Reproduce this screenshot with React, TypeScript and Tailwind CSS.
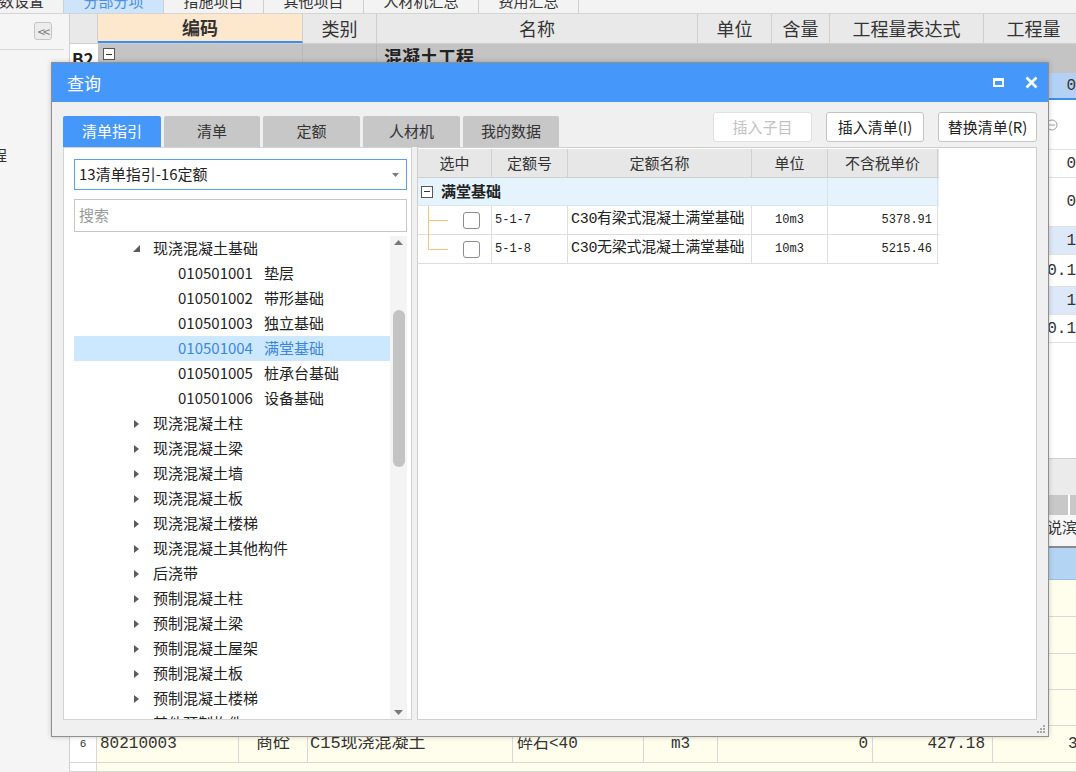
import React from 'react';

const sans = "font-['Noto_Sans_CJK_SC','Noto_Sans',sans-serif]";
const song = "font-['Liberation_Mono','Noto_Sans_CJK_SC',monospace]";

const topTabs = [
  { label: '参数设置', w: 'w-[64px]', align: 'justify-end pr-[19px]', active: false },
  { label: '分部分项', w: 'w-[100px]', align: 'justify-center', active: true },
  { label: '措施项目', w: 'w-[100px]', align: 'justify-center', active: false },
  { label: '其他项目', w: 'w-[100px]', align: 'justify-center', active: false },
  { label: '人材机汇总', w: 'w-[115px]', align: 'justify-center', active: false },
  { label: '费用汇总', w: 'w-[100px]', align: 'justify-center', active: false },
];

function TopTabs() {
  return (
    <div className="flex h-[14px] bg-[#f3f3f3] border-b border-[#d4d4d4] overflow-hidden">
      {topTabs.map((t) => (
        <div
          key={t.label}
          className={`${t.w} ${t.align} flex items-start overflow-hidden border-r border-[#cfcfcf] text-[15px] leading-[2px] whitespace-nowrap ${
            t.active ? 'bg-[#cde4fa] text-[#4a8fe0]' : 'text-[#333]'
          }`}
        >
          {t.label}
        </div>
      ))}
    </div>
  );
}

function Sidebar() {
  return (
    <div className="w-[70px] shrink-0 bg-[#f5f5f5] border-r border-[#d0d0d0] flex flex-col overflow-hidden">
      <div className="w-[64px] h-[36px] border-b border-[#d6d6d6] pl-[34px] pt-[8px]">
        <div className="w-[18px] h-[18px] rounded-[3px] border border-[#c4c4c4] bg-[#ececec] flex items-center justify-center text-[13px] leading-none text-[#777] tracking-[-2px]">
          &lt;&lt;
        </div>
      </div>
      <div className="mt-[96px] -ml-[8px] text-[15px] leading-[18px] text-[#333]">程</div>
    </div>
  );
}

const upperW = ['w-[28px]', 'w-[205px]', 'w-[74px]', 'w-[321px]', 'w-[74px]', 'w-[58px]', 'w-[154px]', 'w-[100px]'];
const upperHead = ['', '编码', '类别', '名称', '单位', '含量', '工程量表达式', '工程量'];

const upperRows = [
  { h: 'h-[27px]', bg: 'bg-[#b2d1f4] border-b-2 border-b-[#3c8cf2]', val: '0' },
  { h: 'h-[50px]', bg: 'bg-white', val: 'icon' },
  { h: 'h-[28px]', bg: 'bg-white', val: '0' },
  { h: 'h-[49px]', bg: 'bg-white', val: '0' },
  { h: 'h-[28px]', bg: 'bg-[#dde9f8]', val: '1' },
  { h: 'h-[32px]', bg: 'bg-white', val: '0.1' },
  { h: 'h-[28px]', bg: 'bg-[#dde9f8]', val: '1' },
  { h: 'h-[28px]', bg: 'bg-white', val: '0.1' },
];

const lowerW = ['w-[27px]', 'w-[142px]', 'w-[69px]', 'w-[205px]', 'w-[131px]', 'w-[74px]', 'w-[155px]', 'w-[120px]', 'w-[100px]'];

function MinusBox() {
  return (
    <div className="w-[12px] h-[12px] bg-white border border-[#555] flex items-center justify-center">
      <div className="w-[6px] h-px bg-[#333]" />
    </div>
  );
}

function BackGrid() {
  return (
    <div className="flex-1 min-w-0 flex flex-col overflow-hidden">
      {/* header */}
      <div className="flex h-[30px] shrink-0 bg-[#e9e9e9] border-b border-[#cfcfcf]">
        {upperHead.map((h, i) => (
          <div
            key={i}
            className={`${upperW[i]} shrink-0 h-full flex items-center justify-center border-r border-[#cfcfcf] text-[18px] text-[#333] ${
              i === 1 ? 'bg-[#fde8cd] border-b-2 border-b-[#3a8ef0] font-bold text-[#222]' : ''
            }`}
          >
            {h}
          </div>
        ))}
      </div>
      {/* B2 row */}
      <div className="flex h-[29px] shrink-0 bg-[#c4c4c4]">
        <div className={`${upperW[0]} shrink-0 bg-white flex items-center pl-[2px] font-bold text-[17px] text-[#222]`}>B2</div>
        <div className={`${upperW[1]} shrink-0 flex items-start pt-[4px] pl-[5px] border-r border-[#b8b8b8]`}>
          <MinusBox />
        </div>
        <div className={`${upperW[2]} shrink-0 border-r border-[#b8b8b8]`} />
        <div className={`${upperW[3]} shrink-0 pl-[7px] font-bold text-[18px] text-[#222] leading-[24px]`}>混凝土工程</div>
      </div>
      {upperRows.map((r, i) => (
        <div key={i} className={`flex ${r.h} shrink-0 ${r.bg} border-b border-[#e2e2e2]`}>
          {upperW.map((w, j) => (
            <div key={j} className={`${w} shrink-0 h-full flex items-center ${j === 7 ? 'justify-end pr-[8px]' : ''}`}>
              {j === 7 && r.val === 'icon' ? (
                <div className="w-full pl-[62px]">
                  <svg width="12" height="12" viewBox="0 0 12 12">
                    <circle cx="6" cy="6" r="5" fill="none" stroke="#a0a0a0" strokeWidth="1" />
                    <path d="M3 6h6" stroke="#a0a0a0" strokeWidth="1" />
                  </svg>
                </div>
              ) : j === 7 ? (
                <span className={`${song} text-[16px] text-[#333]`}>{r.val}</span>
              ) : null}
            </div>
          ))}
        </div>
      ))}
      <div className="flex-1 bg-white" />
      {/* lower panel */}
      <div className="h-[314px] shrink-0 flex flex-col">
        <div className="h-[37px] bg-[#ebebeb] border-t border-[#d0d0d0]" />
        <div className="h-[20px] flex gap-[2px] bg-white">
          {[0, 1, 2, 3, 4, 5, 6, 7, 8, 9, 10].map((i) => (
            <div key={i} className="w-[98px] shrink-0 bg-[#c8c8c8]" />
          ))}
        </div>
        <div className="h-[31px] flex bg-[#f7f7f7]">
          {lowerW.map((w, j) => (
            <div key={j} className={`${w} shrink-0 h-full border-r border-[#d4d4d4] flex items-center`}>
              {j === 8 ? <span className={`${song} pl-[54px] text-[15px] text-[#333] whitespace-nowrap`}>说滨</span> : null}
            </div>
          ))}
        </div>
        <div className="h-[2px] bg-[#8a8a8a]" />
        <div className="h-[32px] bg-[#b4d4f4] border-b border-[#9dbfe4]" />
        {['h-[37px]', 'h-[37px]', 'h-[36px]', 'h-[36px]'].map((h, i) => (
          <div key={i} className={`${h} flex border-b border-[#d8d8d8]`}>
            <div className={`${lowerW[0]} shrink-0 bg-white border-r border-[#d8d8d8]`} />
            <div className="flex-1 bg-[#fffdec]" />
          </div>
        ))}
        <div className={`h-[37px] flex border-b border-[#d8d8d8] ${song} text-[16px] text-[#333]`}>
          <div className={`${lowerW[0]} shrink-0 bg-white border-r border-[#d8d8d8] flex items-center justify-center text-[11px]`}>6</div>
          <div className={`${lowerW[1]} shrink-0 bg-[#fffdec] border-r border-[#d8d8d8] flex items-center pl-[3px]`}>80210003</div>
          <div className={`${lowerW[2]} shrink-0 bg-[#fffdec] border-r border-[#d8d8d8] flex items-center justify-center text-[17px]`}>商砼</div>
          <div className={`${lowerW[3]} shrink-0 bg-[#fffdec] border-r border-[#d8d8d8] flex items-center pl-[2px] text-[17px]`}>C15现浇混凝土</div>
          <div className={`${lowerW[4]} shrink-0 bg-[#fffdec] border-r border-[#d8d8d8] flex items-center pl-[4px] text-[16px]`}>碎石&lt;40</div>
          <div className={`${lowerW[5]} shrink-0 bg-[#fffdec] border-r border-[#d8d8d8] flex items-center justify-center`}>m3</div>
          <div className={`${lowerW[6]} shrink-0 bg-[#fffdec] border-r border-[#d8d8d8] flex items-center justify-end pr-[4px]`}>0</div>
          <div className={`${lowerW[7]} shrink-0 bg-[#fffdec] border-r border-[#d8d8d8] flex items-center justify-end pr-[7px]`}>427.18</div>
          <div className={`${lowerW[8]} shrink-0 bg-[#fffdec] flex items-center pl-[75px]`}>3</div>
        </div>
        <div className="flex-1 flex border-b border-[#d8d8d8]">
          <div className={`${lowerW[0]} shrink-0 bg-white border-r border-[#d8d8d8]`} />
          <div className="flex-1 bg-[#fffdec]" />
        </div>
      </div>
    </div>
  );
}

type TreeItem = { label: string; code?: string; level: 1 | 2; expanded?: boolean; selected?: boolean };

const tree: TreeItem[] = [
  { label: '现浇混凝土基础', level: 1, expanded: true },
  { code: '010501001', label: '垫层', level: 2 },
  { code: '010501002', label: '带形基础', level: 2 },
  { code: '010501003', label: '独立基础', level: 2 },
  { code: '010501004', label: '满堂基础', level: 2, selected: true },
  { code: '010501005', label: '桩承台基础', level: 2 },
  { code: '010501006', label: '设备基础', level: 2 },
  { label: '现浇混凝土柱', level: 1 },
  { label: '现浇混凝土梁', level: 1 },
  { label: '现浇混凝土墙', level: 1 },
  { label: '现浇混凝土板', level: 1 },
  { label: '现浇混凝土楼梯', level: 1 },
  { label: '现浇混凝土其他构件', level: 1 },
  { label: '后浇带', level: 1 },
  { label: '预制混凝土柱', level: 1 },
  { label: '预制混凝土梁', level: 1 },
  { label: '预制混凝土屋架', level: 1 },
  { label: '预制混凝土板', level: 1 },
  { label: '预制混凝土楼梯', level: 1 },
  { label: '其他预制构件', level: 1 },
];

function TreeRow({ item }: { item: TreeItem }) {
  if (item.level === 2) {
    return (
      <div
        className={`h-[25px] shrink-0 flex items-center pl-[104px] text-[15px] whitespace-nowrap ${
          item.selected ? 'bg-[#cce8ff] text-[#3d86dc]' : 'text-[#222]'
        }`}
      >
        <span>{item.code}</span>
        <span className="ml-[11px]">{item.label}</span>
      </div>
    );
  }
  return (
    <div className="h-[25px] shrink-0 flex items-center pl-[59px] text-[15px] text-[#222] whitespace-nowrap">
      <span className="w-[20px] flex items-center">
        {item.expanded ? (
          <svg width="7" height="7" viewBox="0 0 7 7">
            <path d="M7 0L7 7L0 7Z" fill="#5c5c5c" />
          </svg>
        ) : (
          <svg width="5" height="8" viewBox="0 0 5 8" className="ml-[1px]">
            <path d="M0 0L5 4L0 8Z" fill="#5c5c5c" />
          </svg>
        )}
      </span>
      <span>{item.label}</span>
    </div>
  );
}

function LeftPanel() {
  return (
    <div className="w-[349px] shrink-0 bg-white border border-[#d2d2d2] flex flex-col pl-[10px] pr-[4px] pt-[11px]">
      <div className="h-[31px] shrink-0 border border-[#5b9ff2] flex items-center pl-[4px] pr-[7px] text-[15px] text-[#222]">
        <span>13清单指引-16定额</span>
        <svg width="7" height="4" viewBox="0 0 7 4" className="ml-auto">
          <path d="M0 0L7 0L3.5 4Z" fill="#7a7a7a" />
        </svg>
      </div>
      <div className="h-[33px] mt-[9px] shrink-0 border border-[#c6c6c6] flex items-center pl-[4px] text-[15px] text-[#9a9a9a]">
        搜索
      </div>
      <div className="flex-1 min-h-0 mt-[4px] flex">
        <div className="flex-1 min-w-0 flex flex-col overflow-hidden">
          {tree.map((t, i) => (
            <TreeRow key={i} item={t} />
          ))}
        </div>
        <div className="w-[17px] shrink-0 bg-[#f4f4f4] flex flex-col items-center">
          <svg width="9" height="5" viewBox="0 0 9 5" className="mt-[4px]">
            <path d="M0 5L9 5L4.5 0Z" fill="#7a7a7a" />
          </svg>
          <div className="mt-[65px] w-[12px] h-[157px] rounded-full bg-[#c3c3c3]" />
          <svg width="9" height="5" viewBox="0 0 9 5" className="mt-auto mb-[4px]">
            <path d="M0 0L9 0L4.5 5Z" fill="#7a7a7a" />
          </svg>
        </div>
      </div>
    </div>
  );
}

const quotaCols = ['w-[74px]', 'w-[76px]', 'w-[184px]', 'w-[76px]', 'w-[110px]'];
const quotaHead = ['选中', '定额号', '定额名称', '单位', '不含税单价'];
const quotaRows = [
  { code: '5-1-7', name: 'C30有梁式混凝土满堂基础', unit: '10m3', price: '5378.91', last: false },
  { code: '5-1-8', name: 'C30无梁式混凝土满堂基础', unit: '10m3', price: '5215.46', last: true },
];

function RightPanel() {
  return (
    <div className="flex-1 min-w-0 bg-white border border-[#cfcfcf] pt-px">
      <div className="w-[521px]">
        <div className="flex h-[29px] bg-[#e7e7e7] border-b border-[#d0d0d0]">
          {quotaHead.map((h, i) => (
            <div key={h} className={`${quotaCols[i]} shrink-0 flex items-center justify-center border-r border-[#d0d0d0] text-[15px] text-[#333]`}>
              {h}
            </div>
          ))}
        </div>
        <div className="flex h-[28px] bg-[#e5f3fd] border-b border-[#dde6ee]">
          <div className="w-[410px] shrink-0 flex items-center pl-[3px] gap-[8px] border-r border-[#d6e2ec]">
            <MinusBox />
            <span className="font-bold text-[15px] text-[#222]">满堂基础</span>
          </div>
          <div className="w-[110px] shrink-0 border-r border-[#d6e2ec]" />
        </div>
        {quotaRows.map((r) => (
          <div key={r.code} className="flex h-[29px] border-b border-[#dedede]">
            <div className={`${quotaCols[0]} shrink-0 relative flex items-center border-r border-[#dedede]`}>
              <svg width="74" height="29" viewBox="0 0 74 29" className="absolute left-0 top-0">
                <path d={r.last ? 'M10.5 0V14.5H30' : 'M10.5 0V29M10.5 14.5H30'} stroke="#f6c27e" strokeWidth="1" fill="none" />
              </svg>
              <div className="relative ml-[45px] w-[17px] h-[17px] rounded-[3px] border border-[#8c8c8c] bg-white" />
            </div>
            <div className={`${quotaCols[1]} shrink-0 flex items-center pl-[3px] border-r border-[#dedede] ${song} text-[12px] text-[#222]`}>
              {r.code}
            </div>
            <div className={`${quotaCols[2]} shrink-0 flex items-center pl-[3px] border-r border-[#dedede] ${song} text-[15px] tracking-[-0.3px] text-[#222] whitespace-nowrap`}>
              {r.name}
            </div>
            <div className={`${quotaCols[3]} shrink-0 flex items-center justify-center border-r border-[#dedede] ${song} text-[12px] text-[#222]`}>
              {r.unit}
            </div>
            <div className={`${quotaCols[4]} shrink-0 flex items-center justify-end pr-[5px] border-r border-[#dedede] ${song} text-[12px] text-[#222]`}>
              {r.price}
            </div>
          </div>
        ))}
      </div>
    </div>
  );
}

const dlgTabs = [
  { label: '清单指引', w: 'w-[98px]', active: true },
  { label: '清单', w: 'w-[96px]', active: false },
  { label: '定额', w: 'w-[97px]', active: false },
  { label: '人材机', w: 'w-[97px]', active: false },
  { label: '我的数据', w: 'w-[96px]', active: false },
];

function QueryDialog() {
  return (
    <div className="absolute left-[51px] top-[62px] w-[998px] h-[675px] flex flex-col bg-[#f0f0f0] border border-[#8f8f8f] shadow-[0_0_5px_rgba(0,0,0,0.2)]">
      <div className="h-[39px] shrink-0 bg-[#4598fa] flex items-center pl-[15px] pr-[10px] text-white">
        <span className="text-[17px]">查询</span>
        <div className="ml-auto flex items-center gap-[21px]">
          <div className="w-[11px] h-[9px] border-2 border-t-[3px] border-white" />
          <svg width="13" height="13" viewBox="0 0 13 13">
            <path d="M1.5 1.5L11.5 11.5M11.5 1.5L1.5 11.5" stroke="#fff" strokeWidth="2.6" />
          </svg>
        </div>
      </div>
      <div className="h-[45px] shrink-0 flex items-end px-[11px]">
        <div className="flex gap-[3px] items-end">
          {dlgTabs.map((t) => (
            <div
              key={t.label}
              className={`${t.w} h-[31px] rounded-t-[2px] flex items-center justify-center text-[15px] ${
                t.active ? 'bg-[#4598fa] text-white' : 'bg-[#c7c7c7] text-[#333]'
              }`}
            >
              {t.label}
            </div>
          ))}
        </div>
        <div className="ml-auto self-start mt-[10px] flex gap-[14px]">
          <div className="w-[99px] h-[30px] rounded-[3px] border border-[#e0e0e0] bg-white flex items-center justify-center text-[15px] text-[#c2c2c2]">
            插入子目
          </div>
          <div className="w-[98px] h-[30px] rounded-[3px] border border-[#c4c4c4] bg-white flex items-center justify-center text-[15px] text-[#222]">
            插入清单(I)
          </div>
          <div className="w-[99px] h-[30px] rounded-[3px] border border-[#c4c4c4] bg-white flex items-center justify-center text-[15px] text-[#222]">
            替换清单(R)
          </div>
        </div>
      </div>
      <div className="h-[573px] shrink-0 flex px-[11px] gap-[5px]">
        <LeftPanel />
        <RightPanel />
      </div>
      <div className="flex-1 flex items-end justify-end pr-[3px] pb-[3px]">
        <svg width="9" height="9" viewBox="0 0 9 9">
          <g fill="#a8a8a8">
            <rect x="7" y="1" width="2" height="2" />
            <rect x="4" y="4" width="2" height="2" />
            <rect x="7" y="4" width="2" height="2" />
            <rect x="1" y="7" width="2" height="2" />
            <rect x="4" y="7" width="2" height="2" />
            <rect x="7" y="7" width="2" height="2" />
          </g>
        </svg>
      </div>
    </div>
  );
}

export default function App() {
  return (
    <div className={`relative w-[1076px] h-[772px] overflow-hidden bg-white text-[#222] ${sans}`}>
      <TopTabs />
      <div className="flex h-[758px]">
        <Sidebar />
        <BackGrid />
      </div>
      <QueryDialog />
    </div>
  );
}
